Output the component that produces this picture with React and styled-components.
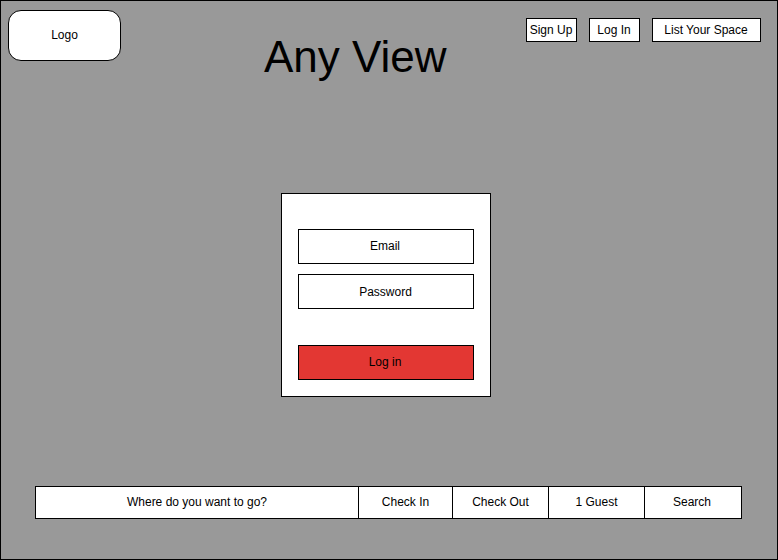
import React from "react";
import styled, { createGlobalStyle } from "styled-components";

const GlobalStyle = createGlobalStyle`
  *, *::before, *::after { box-sizing: border-box; }
  body { margin: 0; }
`;

const Page = styled.main`
  display: flex;
  flex-direction: column;
  width: 778px;
  height: 560px;
  border: 1px solid #000;
  background: #999;
  color: #000;
  font: 12px/14px "Liberation Sans", Arial, sans-serif;
`;

const Header = styled.header`
  display: flex;
  align-items: flex-start;
  height: 192px;
  padding: 9px 16px 0 7px;
`;

const Logo = styled.div`
  display: flex;
  align-items: center;
  justify-content: center;
  width: 113px;
  height: 51px;
  padding-bottom: 2px;
  border: 1px solid #000;
  border-radius: 13px;
  background: #fff;
`;

const Title = styled.h1`
  margin: 21px 0 0 143px;
  width: 186px;
  font-size: 44px;
  line-height: 52px;
  font-weight: 400;
  white-space: nowrap;
`;

const Nav = styled.nav`
  display: flex;
  gap: 12px;
  margin: 8px 0 0 auto;
`;

const Button = styled.button`
  width: ${(p) => p.$width}px;
  height: 24px;
  padding: 0 1px 0 0;
  border: 1px solid #000;
  background: #fff;
  color: inherit;
  font: inherit;
  white-space: nowrap;
`;

const LoginForm = styled.form`
  display: flex;
  flex-direction: column;
  width: 210px;
  height: 204px;
  margin-left: 280px;
  padding: 35px 16px 16px;
  border: 1px solid #000;
  background: #fff;
`;

const Field = styled.div`
  display: flex;
  align-items: center;
  justify-content: center;
  width: 176px;
  height: 35px;
  margin-bottom: 10px;
  padding: ${(p) => (p.$low ? "1px 1px 0 0" : "0 2px 1px 0")};
  border: 1px solid #000;
`;

const Submit = styled(Field)`
  margin: auto 0 0;
  background: #e33733;
`;

const SearchBar = styled.section`
  display: flex;
  width: 707px;
  height: 33px;
  margin: auto 0 40px 34px;
  border: 1px solid #000;
  background: #fff;
`;

const SearchCell = styled.div`
  display: flex;
  align-items: center;
  justify-content: center;
  width: ${(p) => p.$width}px;
  padding-bottom: 2px;
  border-right: 1px solid #000;
  &:last-child {
    padding-right: 2px;
    border-right: 0;
  }
`;

const cells = [
  ["Where do you want to go?", 323],
  ["Check In", 94],
  ["Check Out", 96],
  ["1 Guest", 96],
  ["Search", 96],
];

export default function App() {
  return (
    <>
      <GlobalStyle />
      <Page>
        <Header>
          <Logo>Logo</Logo>
          <Title>Any View</Title>
          <Nav>
            <Button $width={51}>Sign Up</Button>
            <Button $width={51}>Log In</Button>
            <Button $width={109}>List Your Space</Button>
          </Nav>
        </Header>
        <LoginForm>
          <Field>Email</Field>
          <Field $low>Password</Field>
          <Submit>Log in</Submit>
        </LoginForm>
        <SearchBar>
          {cells.map(([label, width]) => (
            <SearchCell key={label} $width={width}>{label}</SearchCell>
          ))}
        </SearchBar>
      </Page>
    </>
  );
}
